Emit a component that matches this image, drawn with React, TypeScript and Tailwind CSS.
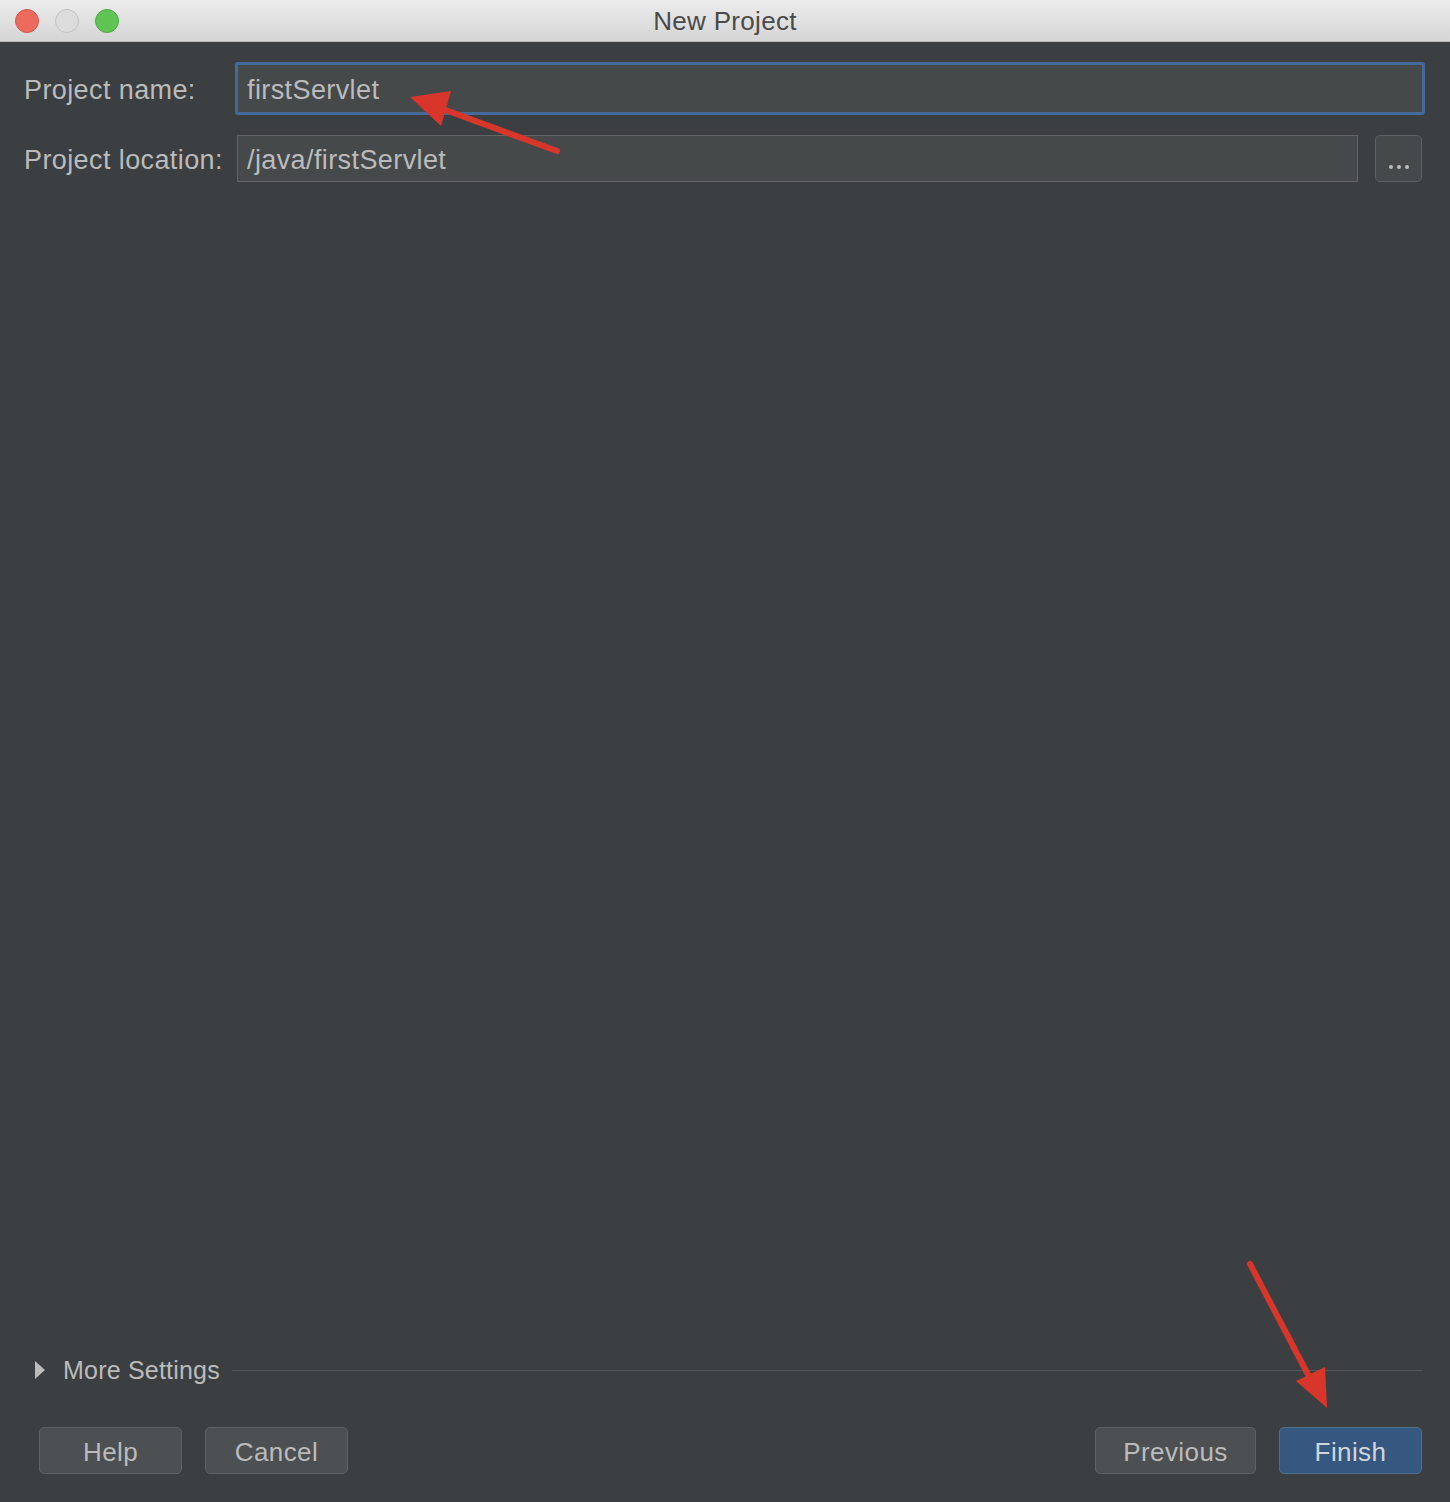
import React from "react";

export default function App() {
  const font = { fontFamily: '"Liberation Sans", Arial, sans-serif' };
  const btn = "h-[47px] rounded-[5px] border flex items-center justify-center pt-[3px] text-[26px] tracking-[0.4px]";
  return (
    <div className="relative w-[1450px] h-[1502px] flex flex-col bg-[#3c3f41] overflow-hidden" style={font}>
      {/* Title bar */}
      <div className="relative h-[42px] shrink-0 flex items-center bg-gradient-to-b from-[#ececec] to-[#d5d5d5] border-b border-[#b9b9b9]">
        <div className="flex items-center gap-[16px] pl-[15px]">
          <div className="w-[24px] h-[24px] rounded-full bg-[#ec6a5e] border border-[#d0584e]" />
          <div className="w-[24px] h-[24px] rounded-full bg-[#dcdcdc] border border-[#c2c2c2]" />
          <div className="w-[24px] h-[24px] rounded-full bg-[#5fc454] border border-[#4ea83f]" />
        </div>
        <div className="absolute inset-0 flex items-center justify-center text-[26px] tracking-[0.3px] text-[#4a4a4a] pt-[1px]">
          New Project
        </div>
      </div>

      {/* Body */}
      <div className="flex-1 flex flex-col">
        <div className="flex flex-col gap-[20px] pt-[20px] pl-[24px]">
          <div className="flex items-center pr-[25px]">
            <div className="w-[211px] mt-[3px] text-[27px] tracking-[0.4px] text-[#bbbbbb]">Project name:</div>
            <div className="flex-1 h-[53px] border-[3px] border-[#44699a] rounded-[3px] bg-[#45494a] flex items-center pl-[9px] pt-[4px]">
              <span className="text-[27px] tracking-[0.4px] text-[#bbbbbb]">firstServlet</span>
            </div>
          </div>
          <div className="flex items-center pr-[28px]">
            <div className="w-[213px] mt-[3px] text-[27px] tracking-[0.4px] text-[#bbbbbb]">Project location:</div>
            <div className="flex-1 h-[47px] border border-[#646464] bg-[#45494a] flex items-center pl-[9px] pt-[3px]">
              <span className="text-[27px] tracking-[0.4px] text-[#bbbbbb]">/java/firstServlet</span>
            </div>
            <div className="ml-[17px] w-[47px] h-[47px] rounded-[5px] border border-[#5e6162] bg-[#45494a] flex items-end justify-center pb-[12px]">
              <div className="flex gap-[4px]">
                <div className="w-[4px] h-[4px] rounded-full bg-[#bbbbbb]" />
                <div className="w-[4px] h-[4px] rounded-full bg-[#bbbbbb]" />
                <div className="w-[4px] h-[4px] rounded-full bg-[#bbbbbb]" />
              </div>
            </div>
          </div>
        </div>

        <div className="flex-1" />

        {/* More settings */}
        <div className="flex items-center pl-[35px] pr-[28px] h-[30px]">
          <svg width="10" height="18" viewBox="0 0 10 18" className="shrink-0">
            <polygon points="0,0 10,9 0,18" fill="#bbbbbb" />
          </svg>
          <span className="ml-[18px] pt-[2px] text-[25px] tracking-[0.2px] text-[#bbbbbb]">More Settings</span>
          <div className="ml-[12px] flex-1 h-px bg-[#555859]" />
        </div>

        {/* Buttons */}
        <div className="flex items-center justify-between pl-[39px] pr-[28px] pt-[42px] pb-[28px]">
          <div className="flex gap-[23px]">
            <div className={`w-[143px] ${btn} border-[#5e6162] bg-[#4c5052] text-[#bbbbbb]`}>Help</div>
            <div className={`w-[143px] ${btn} border-[#5e6162] bg-[#4c5052] text-[#bbbbbb]`}>Cancel</div>
          </div>
          <div className="flex gap-[23px]">
            <div className={`w-[161px] ${btn} border-[#5e6162] bg-[#4c5052] text-[#bbbbbb]`}>Previous</div>
            <div className={`w-[143px] ${btn} border-[#4c708c] bg-[#365880] text-[#d0d6dc]`}>Finish</div>
          </div>
        </div>
      </div>

      {/* Annotation arrows */}
      <svg className="absolute inset-0 pointer-events-none" width="1450" height="1502" viewBox="0 0 1450 1502">
        <line x1="557" y1="151" x2="440" y2="108" stroke="#d9362b" strokeWidth="6" strokeLinecap="round" />
        <polygon points="410,97 451,91 441,126" fill="#d9362b" />
        <line x1="1250" y1="1264" x2="1313" y2="1384" stroke="#d9362b" strokeWidth="6" strokeLinecap="round" />
        <polygon points="1327,1408 1296,1381 1325,1367" fill="#d9362b" />
      </svg>
    </div>
  );
}
